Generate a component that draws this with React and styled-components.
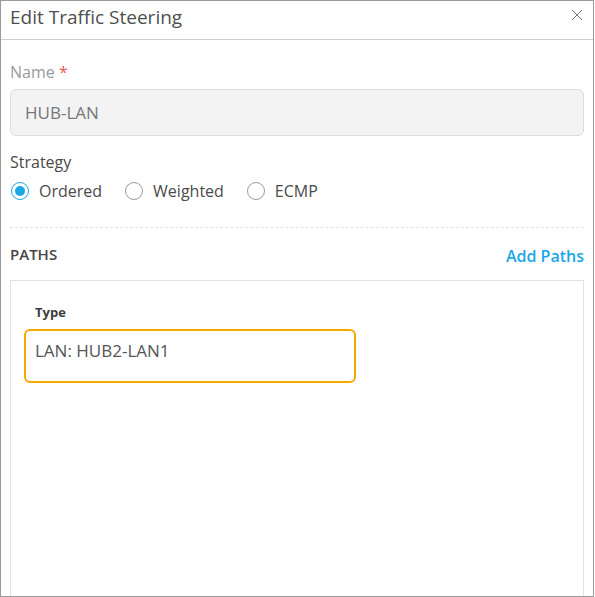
import React from 'react'
import styled, { createGlobalStyle } from 'styled-components'

const GlobalStyle = createGlobalStyle`
  body {
    margin: 0;
    background: #fff;
    font-family: "Open Sans", "Noto Sans", sans-serif;
  }
`

const Dialog = styled.div`
  box-sizing: border-box;
  width: 594px;
  height: 597px;
  border: 1px solid #9a9a9a;
  background: #fff;
  overflow: hidden;
  display: flex;
  flex-direction: column;
`

const Header = styled.div`
  height: 38px;
  border-bottom: 1px solid #cfcfcf;
  display: flex;
  align-items: center;
  justify-content: space-between;
  padding: 0 10px 0 9px;
  flex-shrink: 0;
`

const Title = styled.h2`
  margin: 0;
  font-size: 19px;
  font-weight: 400;
  color: #4f4f4f;
  position: relative;
  top: -3px;
`

const Close = styled.button`
  border: 0;
  background: none;
  padding: 0;
  width: 12px;
  height: 12px;
  display: flex;
  align-self: flex-start;
  margin-top: 8px;
  cursor: pointer;
`

const Body = styled.div`
  flex: 1;
  display: flex;
  flex-direction: column;
  padding: 22px 9px 0 9px;
`

const Label = styled.div`
  font-size: 16px;
  color: ${p => (p.muted ? '#9a9a9a' : '#4a4a4a')};
  line-height: 20px;

  span {
    color: #e8574f;
  }
`

const Input = styled.div`
  box-sizing: border-box;
  height: 47px;
  margin-top: 7px;
  border: 1px solid #dcdcdc;
  border-radius: 6px;
  background: #f3f3f3;
  color: #777;
  font-size: 17px;
  display: flex;
  align-items: center;
  padding-left: 14px;
`

const Field = styled.div`
  margin-bottom: ${p => p.gap || 0}px;
`

const RadioRow = styled.div`
  display: flex;
  align-items: center;
  gap: 22px;
  margin-top: 8px;
  height: 22px;
`

const RadioItem = styled.label`
  display: flex;
  align-items: center;
  gap: 10px;
  font-size: 16px;
  color: #4a4a4a;
  cursor: pointer;
`

const RadioDot = styled.span`
  box-sizing: border-box;
  width: 18px;
  height: 18px;
  border-radius: 50%;
  border: 1px solid ${p => (p.checked ? '#1aa7e8' : '#9a9a9a')};
  display: flex;
  align-items: center;
  justify-content: center;
  margin-left: 1px;

  &::after {
    content: '';
    width: 10px;
    height: 10px;
    border-radius: 50%;
    background: ${p => (p.checked ? '#1aa7e8' : 'transparent')};
  }
`

const Divider = styled.div`
  border-top: 1px dashed #e2e2e2;
  margin: 25px 0 0 0;
`

const SectionHead = styled.div`
  display: flex;
  justify-content: space-between;
  align-items: center;
  margin-top: 16px;
  height: 20px;
`

const SectionTitle = styled.div`
  font-size: 15px;
  font-weight: 600;
  color: #454545;
`

const LinkButton = styled.a`
  font-size: 16px;
  font-weight: 600;
  color: #1aa7e8;
  text-decoration: none;
  position: relative;
  top: 2px;
  cursor: pointer;
`

const PathsBox = styled.div`
  flex: 1;
  margin-top: 16px;
  border: 1px solid #e2e2e2;
  border-bottom: 0;
  padding: 20px 13px 0 13px;
`

const ColLabel = styled.div`
  font-size: 13px;
  font-weight: 700;
  color: #3c3c3c;
  padding-left: 11px;
  line-height: 22px;
`

const PathCard = styled.div`
  box-sizing: border-box;
  width: 332px;
  height: 54px;
  margin-top: 6px;
  border: 2px solid #f5a800;
  border-radius: 6px;
  padding: 8px 0 0 9px;
  font-size: 17px;
  color: #555;
`

const strategies = ['Ordered', 'Weighted', 'ECMP']

export default function App() {
  return (
    <>
      <GlobalStyle />
      <Dialog>
        <Header>
          <Title>Edit Traffic Steering</Title>
          <Close aria-label="close">
            <svg width="12" height="12" viewBox="0 0 12 12">
              <path d="M1 1 L11 11 M11 1 L1 11" stroke="#777" strokeWidth="1" />
            </svg>
          </Close>
        </Header>
        <Body>
          <Field gap={16}>
            <Label muted>
              Name <span>*</span>
            </Label>
            <Input>HUB-LAN</Input>
          </Field>
          <Field>
            <Label>Strategy</Label>
            <RadioRow>
              {strategies.map((s, i) => (
                <RadioItem key={s}>
                  <RadioDot checked={i === 0} />
                  {s}
                </RadioItem>
              ))}
            </RadioRow>
          </Field>
          <Divider />
          <SectionHead>
            <SectionTitle>PATHS</SectionTitle>
            <LinkButton>Add Paths</LinkButton>
          </SectionHead>
          <PathsBox>
            <ColLabel>Type</ColLabel>
            <PathCard>LAN: HUB2-LAN1</PathCard>
          </PathsBox>
        </Body>
      </Dialog>
    </>
  )
}
